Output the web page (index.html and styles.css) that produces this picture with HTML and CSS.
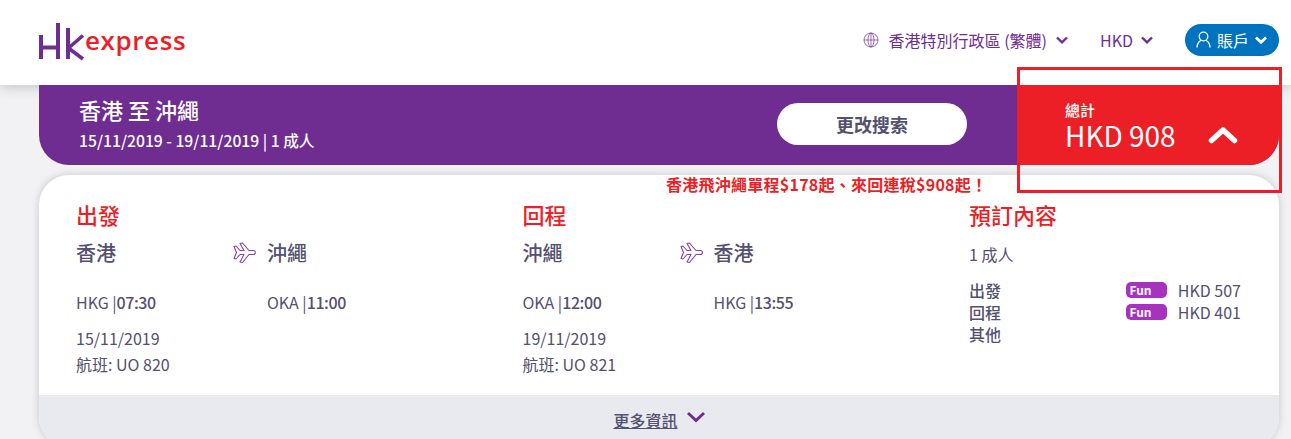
FILE: index.html
```html
<!DOCTYPE html>
<html lang="zh-Hant">
<head>
<meta charset="utf-8">
<title>HK Express</title>
<link rel="stylesheet" href="styles.css">
</head>
<body>
<header class="topbar">
  <a class="logo">
    <svg class="logo-mark" width="46" height="38" viewBox="0 0 46 38"><g fill="none" stroke="#6f2c91" stroke-width="4"><path d="M2 12V36M2 24.500H19M19 0V36M29 5V36"/><path d="M29 25.500L44 12.500M30 25.500L44 36" stroke-width="3.600"/></g></svg>
    <span class="logo-text">express</span>
  </a>
  <nav class="topnav">
    <span class="nav-item region">
      <svg class="globe" width="16" height="16" viewBox="0 0 16 16"><g fill="none" stroke="#7d4a9e" stroke-width=".8"><circle cx="8" cy="8" r="7"/><ellipse cx="8" cy="8" rx="3" ry="7"/><path d="M1 8H15M8 1V15"/></g></svg>
      香港特別行政區 (繁體)
      <svg class="chev" width="12" height="8" viewBox="0 0 12 8"><path d="M1 1.500L6 6.300L11 1.500" fill="none" stroke="#6f2c91" stroke-width="2.400"/></svg>
    </span>
    <span class="nav-item currency">HKD
      <svg class="chev" width="12" height="8" viewBox="0 0 12 8"><path d="M1 1.500L6 6.300L11 1.500" fill="none" stroke="#6f2c91" stroke-width="2.400"/></svg>
    </span>
    <span class="account">
      <svg width="15" height="18" viewBox="0 0 15 18"><g fill="none" stroke="#fff" stroke-width="1.300"><circle cx="7.500" cy="5.500" r="4.300"/><path d="M1 16.500C1 12.500 3.500 10 5 9.500M14 16.500C14 12.500 11.500 10 10 9.500"/></g></svg>
      <span>賬戶</span>
      <svg class="chev" width="12" height="8" viewBox="0 0 12 8"><path d="M1 1.500L6 6.300L11 1.500" fill="none" stroke="#fff" stroke-width="2.800"/></svg>
    </span>
  </nav>
</header>

<main class="content">
  <section class="summary">
    <div class="trip">
      <div class="trip-title">香港 至 沖繩</div>
      <div class="trip-sub">15/11/2019 - 19/11/2019 | 1 成人</div>
    </div>
    <button class="change">更改搜索</button>
    <div class="total">
      <div class="total-text">
        <div class="total-label">總計</div>
        <div class="total-amount">HKD 908</div>
      </div>
      <svg class="total-chev" width="30" height="18" viewBox="0 0 30 18"><path d="M3.500 14.500L15 4L26.500 14.500" fill="none" stroke="#fff" stroke-width="5.500" stroke-linecap="round" stroke-linejoin="round"/></svg>
    </div>
  </section>

  <section class="card">
    <div class="card-body">
      <div class="col flight">
        <h2>出發</h2>
        <div class="flight-grid">
          <div class="stop">
            <div class="city">香港</div>
            <div class="code">HKG |<b>07:30</b></div>
            <div class="date">15/11/2019</div>
            <div class="no">航班: UO 820</div>
          </div>
          <svg class="plane" width="24" height="22" viewBox="0 0 24 22"><path d="M1 4.500L3 4L7 8.500L11 8.500L7 1.500L9.500 1L16 8.500L20.500 8.500C23 8.500 23 12.500 20.500 12.500L16 12.500L9.500 20.500L7 20L11 12.500L7 12.500L3 17L1 16.500L3.500 10.500Z" fill="none" stroke="#8a3fa8" stroke-width="1.100" stroke-linejoin="round"/></svg>
          <div class="stop">
            <div class="city">沖繩</div>
            <div class="code">OKA |<b>11:00</b></div>
          </div>
        </div>
      </div>
      <div class="col flight">
        <h2>回程</h2>
        <div class="flight-grid">
          <div class="stop">
            <div class="city">沖繩</div>
            <div class="code">OKA |<b>12:00</b></div>
            <div class="date">19/11/2019</div>
            <div class="no">航班: UO 821</div>
          </div>
          <svg class="plane" width="24" height="22" viewBox="0 0 24 22"><path d="M1 4.500L3 4L7 8.500L11 8.500L7 1.500L9.500 1L16 8.500L20.500 8.500C23 8.500 23 12.500 20.500 12.500L16 12.500L9.500 20.500L7 20L11 12.500L7 12.500L3 17L1 16.500L3.500 10.500Z" fill="none" stroke="#8a3fa8" stroke-width="1.100" stroke-linejoin="round"/></svg>
          <div class="stop">
            <div class="city">香港</div>
            <div class="code">HKG |<b>13:55</b></div>
          </div>
        </div>
      </div>
      <div class="col booking">
        <h2>預訂內容</h2>
        <div class="pax">1 成人</div>
        <div class="fare"><span class="fare-name">出發</span><span class="badge">Fun</span><span class="price">HKD 507</span></div>
        <div class="fare"><span class="fare-name">回程</span><span class="badge">Fun</span><span class="price">HKD 401</span></div>
        <div class="fare"><span class="fare-name">其他</span></div>
      </div>
    </div>
    <div class="card-foot">
      <a class="more">更多資訊</a>
      <svg width="18" height="12" viewBox="0 0 18 12"><path d="M1 2L9 9.500L17 2" fill="none" stroke="#6f2c91" stroke-width="3"/></svg>
    </div>
  </section>
</main>

<div class="promo">香港飛沖繩單程$178起、來回連稅$908起！</div>
<div class="highlight"></div>
</body>
</html>
```
FILE: styles.css
```css
* { box-sizing: border-box; }
html, body { height: 439px; overflow: hidden; }
body {
  margin: 0;
  background: #f2f2f5;
  font-family: "Noto Sans CJK TC", "Noto Sans", sans-serif;
  color: #54506f;
  position: relative;
}
.topbar {
  height: 85px;
  background: #fff;
  box-shadow: 0 2px 12px rgba(0,0,0,.2);
  display: flex;
  align-items: center;
  justify-content: space-between;
  padding: 0 12px 0 39px;
  position: relative;
  z-index: 0;
}
.logo { display: flex; align-items: flex-end; height: 38px; margin-top: -1px; position: relative; }
.logo-mark { display: block; }
.logo-text {
  font-family: "Open Sans", sans-serif;
  font-weight: 600;
  font-size: 26px;
  line-height: 26px;
  color: #ec1f26;
  letter-spacing: .6px;
  margin-left: 0;
  margin-bottom: 8px;
}
.topnav { display: flex; align-items: center; color: #6f2c91; font-size: 16px; margin-top: -5px; }
.nav-item { display: flex; align-items: center; }
.globe { margin-right: 10px; }
.region .chev { margin-left: 9px; }
.currency { margin-left: 32px; }
.currency .chev { margin-left: 8px; }
.account {
  margin-left: 32px;
  width: 94px;
  height: 32px;
  border-radius: 16px;
  background: #0073bf;
  color: #fff;
  display: flex;
  align-items: center;
  padding-left: 11px;
}
.account span { margin-left: 6px; }
.account .chev { margin-left: 6px; }
.content { padding: 0 12px 0 39px; }
.summary {
  height: 80px;
  background: #6f2c91;
  border-radius: 0 0 30px 30px;
  display: flex;
  align-items: stretch;
  color: #fff;
  position: relative;
  z-index: 1;
  overflow: hidden;
}
.trip { width: 738px; padding: 9px 0 0 40px; }
.trip-title { font-size: 22px; line-height: 30px; font-weight: 500; }
.trip-sub { font-size: 15.700px; line-height: 22px; font-weight: 500; margin-top: 6px; }
.change {
  width: 190px;
  height: 42px;
  margin-top: 18px;
  border: 0;
  border-radius: 21px;
  background: #fff;
  color: #54506f;
  font: 700 18px "Noto Sans CJK TC", sans-serif;
}
.total {
  margin-left: 50px;
  flex: 1;
  background: #ec1f26;
  display: flex;
  padding: 16px 0 0 48px;
}
.total-label { font-size: 15px; line-height: 18px; font-weight: 500; }
.total-amount { font-size: 28px; line-height: 32px; }
.total-chev { margin: 25px 0 0 32px; }
.card {
  margin-top: 10px;
  height: 272px;
  background: #fff;
  border-radius: 30px;
  box-shadow: 0 0 8px rgba(0,0,0,.18);
  overflow: hidden;
  display: flex;
  flex-direction: column;
}
.card-body { height: 220px; display: flex; padding: 26px 0 0 37px; }
.col h2 { margin: 0; font-size: 22px; line-height: 26px; font-weight: 500; color: #ec1f26; }
.flight { width: 446.500px; }
.flight-grid { display: flex; }
.stop { width: 156px; }
.plane { margin: 15px 10px 0 1px; flex: none; }
.city { font-size: 20px; line-height: 28px; font-weight: 500; margin-top: 12px; }
.code { font-size: 16px; line-height: 22px; margin-top: 24px; }
.code b { font-weight: 500; letter-spacing: -.4px; }
.date { font-size: 16px; line-height: 24px; margin-top: 13px; }
.no { font-size: 16px; line-height: 24px; margin-top: 2px; }
.booking { width: 272px; }
.pax { font-size: 16px; line-height: 24px; margin: 15px 0 13px; }
.fare { display: flex; align-items: center; font-size: 16px; line-height: 22px; white-space: nowrap; }
.fare-name { width: 158px; font-weight: 500; }
.badge {
  width: 41px;
  height: 16px;
  border-radius: 5px;
  background: #a633c0;
  color: #fff;
  font-size: 12px;
  line-height: 15px;
  font-weight: 700;
  padding-left: 3px;
}
.price { margin-left: 10.500px; }
.card-foot {
  flex: 1;
  background: #e9eaef;
  display: flex;
  justify-content: center;
  padding-top: 10px;
  gap: 9px;
}
.more { font-size: 16px; line-height: 30px; height: 30px; text-decoration: underline; font-weight: 500; }
.card-foot svg { margin-top: 6px; }
.promo {
  position: absolute;
  left: 666px;
  top: 174px;
  color: #ec1f26;
  font-size: 16px;
  letter-spacing: .25px;
  line-height: 20px;
  font-weight: 700;
  white-space: nowrap;
}
.highlight {
  position: absolute;
  left: 1017px;
  top: 67px;
  width: 265px;
  height: 126px;
  border: 3px solid #ec1f26;
}
```
